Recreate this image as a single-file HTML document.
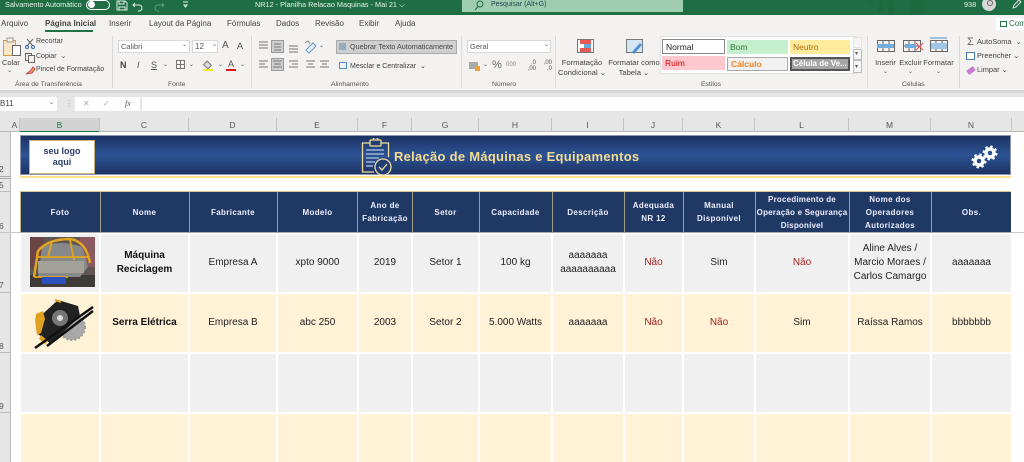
<!DOCTYPE html>
<html lang="pt"><head><meta charset="utf-8"><title>NR12</title>
<style>
html,body{margin:0;padding:0;background:#fff}
#p{position:relative;width:1024px;height:462px;overflow:hidden;font-family:"Liberation Sans",sans-serif;font-size:7.5px;color:#444;background:#fff;filter:blur(.3px)}
#p div{position:absolute;white-space:nowrap}
.c{text-align:center}
.r{background:#dadada;width:1px}
.hd{color:#eef;font-weight:bold;display:flex;align-items:center;justify-content:center;text-align:center;font-size:8px;line-height:13px;letter-spacing:.35px}
.sep{top:192px;width:1px;height:40px;background:#a59f88}
.cell{display:flex;align-items:center;justify-content:center;text-align:center;font-size:10px;line-height:14px;color:#222}
.g{background:#f0f0f0}.y{background:#fff2d6}
.red{color:#a82020}.b{font-weight:bold;color:#111}
.ch{top:118px;height:14px;line-height:14px;text-align:center;font-size:8.5px;color:#555;border-right:1px solid #c4c4c4;box-sizing:border-box}
.st{font-size:8.5px;height:14px;line-height:14px;padding-left:3px;box-sizing:border-box}
.t{font-size:8px;color:#444}
.s{font-size:7px;color:#444}
.l{font-size:6.8px;color:#555;top:81px}
.v{font-size:6px;color:#555}
.rn{left:-1px;font-size:8.5px;color:#555}
</style></head><body><div id="p">
<!-- title bar -->
<div style="left:0;top:0;width:1024px;height:15px;background:#1f6e43"></div>
<div style="left:868px;top:0;width:6px;height:6px;background:#1c6a3e"></div><div style="left:878px;top:0;width:5px;height:12px;background:#1c6a3e"></div><div style="left:888px;top:0;width:5px;height:15px;background:#1c6a3e"></div><div style="left:910px;top:0;width:14px;height:15px;background:#1c6a3e"></div>
<div style="left:5px;top:0;color:#e8f2ec;font-size:7.3px;line-height:10px">Salvamento Automático</div>
<div style="left:86px;top:0;width:22px;height:8px;border:1px solid #fff;border-radius:5px"></div>
<div style="left:88px;top:1px;width:7px;height:7px;background:#fff;border-radius:50%"></div>
<svg style="position:absolute;left:115px;top:0" width="80" height="12" fill="none" stroke="#dfeee6" stroke-width="1"><path d="M2 1h8l2 2v7H2zM4 1v3h5V1M4 10V7h6v3"/><path d="M20 3l-2 2 2 2M18 5h6a3 3 0 0 1 0 6h-1"/><path d="M47 3l2 2-2 2M49 5h-6a3 3 0 0 0 0 6h1" stroke="#5f9c7c"/><path d="M68 2h5M69 5h3l-1.500 2z"/></svg>
<div style="left:255px;top:0;color:#e8f2ec;font-size:7.3px;line-height:10px">NR12 - Planilha Relacao Maquinas - Mai 21 ⌵</div>
<div style="left:462px;top:0;width:221px;height:12px;background:#a0cdb0"></div>
<svg style="position:absolute;left:473px;top:0" width="12" height="11" fill="none" stroke="#1f6e43"><circle cx="7" cy="4" r="3"/><path d="M5 6.500L2 10"/></svg>
<div style="left:491px;top:0;color:#245;font-size:7px;line-height:10px">Pesquisar (Alt+G)</div>
<div style="left:964px;top:0;color:#e8f2ec;font-size:7.3px;line-height:10px">938</div>
<div style="left:982px;top:-3px;width:14px;height:14px;background:#d8d8d8;border-radius:50%"></div>
<div style="left:987px;top:0;width:4px;height:4px;border:1px solid #666;border-radius:50%"></div>
<svg style="position:absolute;left:1011px;top:0" width="12" height="10" fill="none" stroke="#e4e4e4"><path d="M2 8l1-3 5-5 2 2-5 5z"/></svg>
<!-- tabs + ribbon -->
<div style="left:0;top:15px;width:1024px;height:76px;background:#f3f2f1"></div>
<div style="left:0;top:90px;width:1024px;height:3px;background:#d6d6d6"></div>
<div class="t" style="left:1px;top:19px">Arquivo</div>
<div style="left:45px;top:19px;font-size:8px;font-weight:bold;color:#444">Página Inicial</div>
<div style="left:45px;top:30px;width:48px;height:2px;background:#217346"></div>
<div class="t" style="left:109px;top:19px">Inserir</div><div class="t" style="left:149px;top:19px">Layout da Página</div>
<div class="t" style="left:227px;top:19px">Fórmulas</div><div class="t" style="left:276px;top:19px">Dados</div>
<div class="t" style="left:315px;top:19px">Revisão</div><div class="t" style="left:359px;top:19px">Exibir</div><div class="t" style="left:395px;top:19px">Ajuda</div>
<div style="left:996px;top:18px;width:28px;height:12px;background:#fff"></div>
<div style="left:1009px;top:19px;font-size:8px;color:#217346">Com</div>
<div style="left:1000px;top:21px;width:5px;height:4px;border:1px solid #217346"></div>
<!-- separators -->
<div class="r" style="left:112px;top:36px;height:52px"></div><div class="r" style="left:251px;top:36px;height:52px"></div><div class="r" style="left:461px;top:36px;height:52px"></div><div class="r" style="left:555px;top:36px;height:52px"></div><div class="r" style="left:867px;top:36px;height:52px"></div><div class="r" style="left:959px;top:36px;height:52px"></div>
<!-- clipboard -->
<svg style="position:absolute;left:2px;top:37px" width="20" height="21"><rect x="1.500" y="3.500" width="12" height="15" fill="#fbe7c8" stroke="#d89a42"/><rect x="5" y="1" width="6" height="4" fill="#f3f2f1" stroke="#999"/><rect x="10.500" y="8.500" width="8" height="10" fill="#fff" stroke="#666"/></svg>
<div class="s" style="left:2px;top:58px;font-size:7.5px">Colar</div><div class="v" style="left:7px;top:67px">⌄</div>
<svg style="position:absolute;left:24px;top:37px" width="13" height="40" fill="none" stroke="#666"><path d="M3 2l6 7M9 2L3 9" /><circle cx="3" cy="10" r="1.500" stroke="#2b6cb0"/><circle cx="9" cy="10" r="1.500" stroke="#2b6cb0"/><rect x="1.500" y="16.500" width="6" height="7"/><rect x="4.500" y="18.500" width="6" height="7" fill="#f3f2f1"/><path d="M2 37l4-3 3-4 2 2-3 4z" fill="#e8a33d" stroke="#c46"/></svg>
<div class="s" style="left:36px;top:38px">Recortar</div><div class="s" style="left:36px;top:52px">Copiar &nbsp;⌄</div><div class="s" style="left:36px;top:66px">Pincel de Formatação</div>
<div class="l" style="left:15px">Área de Transferência</div>
<div class="l" style="left:168px">Fonte</div><div class="l" style="left:331px">Alinhamento</div><div class="l" style="left:492px">Número</div><div class="l" style="left:701px">Estilos</div><div class="l" style="left:902px">Células</div>
<!-- font -->
<div style="left:118px;top:40px;width:72px;height:13px;background:#fff;border:1px solid #d8d8d8;box-sizing:border-box;padding-left:2px;line-height:11px;color:#555;font-size:7.5px">Calibri</div>
<div class="v" style="left:182px;top:41px">⌄</div>
<div style="left:192px;top:40px;width:26px;height:13px;background:#fff;border:1px solid #d8d8d8;box-sizing:border-box;padding-left:2px;line-height:11px;color:#555;font-size:8px">12</div>
<div class="v" style="left:212px;top:41px">⌄</div>
<div style="left:222px;top:40px;font-size:10px;color:#555">A</div><div style="left:237px;top:41px;font-size:9px;color:#555">A</div>
<div style="left:120px;top:60px;font-size:9px;font-weight:bold;color:#444">N</div><div style="left:137px;top:60px;font-size:9px;font-style:italic;color:#555">I</div><div style="left:151px;top:60px;font-size:9px;text-decoration:underline;color:#555">S</div>
<div class="v" style="left:163px;top:61px">⌄</div>
<div style="left:176px;top:60px;width:9px;height:9px;border:1px solid #777;box-sizing:border-box"></div>
<div style="left:180px;top:60px;width:1px;height:9px;background:#777"></div><div style="left:176px;top:64px;width:9px;height:1px;background:#777"></div>
<div class="v" style="left:189px;top:61px">⌄</div>
<div style="left:204px;top:62px;width:7px;height:6px;background:#ddd;border:1px solid #777;box-sizing:border-box;transform:rotate(45deg)"></div><div style="left:203px;top:69px;width:10px;height:2px;background:#f2ee20"></div>
<div class="v" style="left:218px;top:61px">⌄</div>
<div style="left:228px;top:59px;font-size:9px;color:#555">A</div><div style="left:226px;top:69px;width:10px;height:2px;background:#e01515"></div>
<div class="v" style="left:240px;top:61px">⌄</div>
<!-- align -->
<svg style="position:absolute;left:257px;top:39px" width="75" height="34" stroke="#777" fill="none">
<rect x="14.500" y="1.500" width="12" height="12" fill="#cfcfcf" stroke="#999"/><rect x="14.500" y="19.500" width="12" height="12" fill="#cfcfcf" stroke="#999"/>
<path d="M2 3h9M2 6h9M2 9h9M17 5h7M17 8h7M17 11h7M32 7h9M32 10h9M32 13h9M2 22h9M2 25h6M2 28h9M16 22h9M17 25h7M16 28h9M32 22h9M35 25h6M32 28h9M49 22h9M51 25h5M49 28h9M63 22h9M65 25h5M63 28h9"/>
<path d="M49 11l7-7 3 3-7 7z" stroke="#5a9bd5"/><path d="M48 4l3-2 2 3" stroke="#888"/></svg>
<div class="v" style="left:319px;top:42px">⌄</div>
<div style="left:336px;top:40px;width:121px;height:14px;background:#cfcfcf;border:1px solid #aaa;box-sizing:border-box;font-size:7.2px;line-height:12px;color:#444;padding-left:13px">Quebrar Texto Automaticamente</div>
<div style="left:339px;top:43px;width:7px;height:7px;background:#9ab"></div>
<div style="left:339px;top:62px;width:8px;height:7px;border:1px solid #4a90d0;box-sizing:border-box"></div>
<div class="s" style="left:350px;top:62px">Mesclar e Centralizar &nbsp;⌄</div>
<!-- number -->
<div style="left:467px;top:40px;width:84px;height:13px;background:#fff;border:1px solid #d8d8d8;box-sizing:border-box;padding-left:2px;line-height:11px;color:#555;font-size:7.5px">Geral</div>
<div class="v" style="left:544px;top:41px">⌄</div>
<div style="left:469px;top:62px;width:9px;height:7px;background:#aaa"></div><div style="left:475px;top:66px;width:5px;height:5px;background:#f0a030"></div>
<div class="v" style="left:483px;top:61px">⌄</div>
<div style="left:492px;top:59px;font-size:11px;color:#666">%</div><div style="left:506px;top:62px;font-size:6px;color:#888">000</div>
<div style="left:524px;top:60px;font-size:6px;line-height:6px;color:#555;width:12px;text-align:right">,0<br>,00</div>
<div style="left:540px;top:60px;font-size:6px;line-height:6px;color:#555;width:12px;text-align:right">,00<br>,0</div>
<!-- cond -->
<svg style="position:absolute;left:574px;top:39px" width="80" height="17"><rect x="3.500" y="0.500" width="16" height="13" fill="#fff" stroke="#777"/><rect x="6" y="1" width="11" height="4" fill="#e85a5a"/><rect x="10" y="5" width="7" height="4" fill="#6aa8dc"/><rect x="6" y="9" width="11" height="4" fill="#e85a5a"/><rect x="52.500" y="0.500" width="16" height="13" fill="#d5e5f2" stroke="#777"/><path d="M58 13l8-9 2 2-8 9z" fill="#4a90d0"/></svg>
<div class="s c" style="left:558px;top:58px;width:48px;line-height:9.500px;font-size:7.600px">Formatação<br>Condicional ⌄</div>
<div class="s c" style="left:604px;top:58px;width:60px;line-height:9.500px;font-size:7.600px">Formatar como<br>Tabela ⌄</div>
<!-- styles -->
<div style="left:660px;top:36px;width:197px;height:38px;background:#fff;border:1px solid #e2e2e2;box-sizing:border-box"></div>
<div class="st" style="left:662px;top:39px;width:63px;height:15px;background:#fff;border:1px solid #888;color:#222">Normal</div>
<div class="st" style="left:727px;top:40px;width:61px;background:#c6efce;color:#2f7d32">Bom</div>
<div class="st" style="left:790px;top:40px;width:60px;background:#ffeb9c;color:#a8700a">Neutro</div>
<div class="st" style="left:662px;top:56px;width:63px;background:#ffc7ce;color:#c00">Ruim</div>
<div class="st" style="left:727px;top:57px;width:61px;background:#f2f2f2;border:1px solid #aaa;color:#f08020;font-weight:bold;line-height:12px">Cálculo</div>
<div class="st" style="left:790px;top:57px;width:60px;background:#a5a5a5;border:2px solid #555;color:#fff;font-weight:bold;line-height:10px;padding-left:1px;font-size:8px">Célula de Ve...</div>
<div style="left:853px;top:37px;width:9px;height:11px;background:#f5f5f5;border:1px solid #e4e4e4;box-sizing:border-box"></div>
<div style="left:853px;top:49px;width:9px;height:11px;background:#f5f5f5;border:1px solid #bbb;box-sizing:border-box"></div>
<div style="left:853px;top:60px;width:9px;height:13px;background:#f5f5f5;border:1px solid #bbb;box-sizing:border-box"></div>
<div class="v" style="left:855px;top:50px">▾</div><div class="v" style="left:855px;top:63px">▾</div>
<!-- cells -->
<svg style="position:absolute;left:875px;top:37px" width="82" height="18" fill="none" stroke="#666"><rect x="2.500" y="3.500" width="17" height="11"/><rect x="28.500" y="3.500" width="17" height="11"/><rect x="55.500" y="3.500" width="17" height="11"/><path d="M8 4v10M14 4v10M3 9h17M34 4v10M40 4v10M29 9h17M61 4v10M67 4v10"/><rect x="2" y="7" width="17" height="4" fill="#70aee0" stroke="none"/><rect x="30" y="7" width="11" height="4" fill="#70aee0" stroke="none"/><rect x="56" y="6" width="16" height="6" fill="#9cc5e8" stroke="none"/><path d="M41 6l7 7M48 6l-7 7" stroke="#e85050"/><path d="M55 1h17" stroke="#4a90d0"/></svg>
<div class="s c" style="left:869.500px;top:58px;width:32px;font-size:7.500px">Inserir</div><div class="s c" style="left:894.500px;top:58px;width:32px;font-size:7.500px">Excluir</div><div class="s c" style="left:920.500px;top:58px;width:36px;font-size:7.500px">Formatar</div>
<div class="v c" style="left:869.500px;top:68px;width:32px">⌄</div><div class="v c" style="left:894.500px;top:68px;width:32px">⌄</div><div class="v c" style="left:920.500px;top:68px;width:36px">⌄</div>
<div style="left:967px;top:36px;font-size:11px;color:#666">Σ</div><div class="s" style="left:977px;top:37px;font-size:7.400px">AutoSoma &nbsp;⌄</div>
<div style="left:966px;top:52px;width:9px;height:8px;background:#fff;border:1px solid #4a7ab0;box-sizing:border-box"></div><div class="s" style="left:977px;top:51px;font-size:7.400px">Preencher ⌄</div>
<div style="left:967px;top:68px;width:8px;height:5px;background:#c87ad0;transform:rotate(-35deg)"></div><div class="s" style="left:977px;top:65px;font-size:7.400px">Limpar ⌄</div>
<!-- formula -->
<div style="left:0;top:93px;width:1024px;height:22px;background:#e6e6e6"></div>
<div style="left:0;top:97px;width:57px;height:14px;background:#fff"></div>
<div style="left:0;top:98px;font-size:8px;color:#444;line-height:12px">B11</div><div class="v" style="left:49px;top:99px">⌄</div>
<div style="left:65px;top:99px;color:#aaa;font-size:8px">⋮</div>
<div style="left:75px;top:97px;width:65px;height:14px;background:#fff"></div>
<div style="left:83px;top:99px;color:#aaa;font-size:8px">✕</div><div style="left:103px;top:99px;color:#aaa;font-size:8px">✓</div><div style="left:125px;top:99px;color:#555;font-size:8px;font-style:italic;font-family:'Liberation Serif',serif">fx</div>
<div style="left:142px;top:97px;width:882px;height:14px;background:#fff"></div>
<!-- sheet -->
<div style="left:0;top:115px;width:1024px;height:17px;background:#e6e6e6"></div>
<div style="left:0;top:131px;width:1024px;height:1px;background:#b5b5b5"></div>
<div style="left:0;top:132px;width:10px;height:330px;background:#e6e6e6;border-right:1px solid #bbb"></div>
<div style="left:20px;top:118px;width:80px;height:14px;background:#d3d3d3;border-bottom:1px solid #217346;box-sizing:border-box"></div>
<div class="ch" style="left:10px;width:10px">A</div><div class="ch" style="left:20px;width:80px;color:#217346">B</div><div class="ch" style="left:100px;width:89px">C</div><div class="ch" style="left:189px;width:88px">D</div><div class="ch" style="left:277px;width:81px">E</div><div class="ch" style="left:358px;width:54px">F</div><div class="ch" style="left:412px;width:67px">G</div><div class="ch" style="left:479px;width:73px">H</div><div class="ch" style="left:552px;width:72px">I</div><div class="ch" style="left:624px;width:59px">J</div><div class="ch" style="left:683px;width:72px">K</div><div class="ch" style="left:755px;width:94px">L</div><div class="ch" style="left:849px;width:82px">M</div><div class="ch" style="left:931px;width:81px">N</div>
<div class="rn" style="top:164px">2</div><div style="left:0;top:176px;width:10px;height:1px;background:#aaa"></div><div style="left:0;top:178px;width:10px;height:1px;background:#aaa"></div><div class="rn" style="top:180px">5</div><div style="left:0;top:191px;width:10px;height:1px;background:#bbb"></div>
<div class="rn" style="top:221px">6</div><div style="left:0;top:232px;width:1024px;height:1px;background:#c8c8c8"></div>
<div class="rn" style="top:280px">7</div><div style="left:0;top:292px;width:10px;height:1px;background:#bbb"></div>
<div class="rn" style="top:341px">8</div><div style="left:0;top:352px;width:10px;height:1px;background:#bbb"></div>
<div class="rn" style="top:401px">9</div><div style="left:0;top:412px;width:10px;height:1px;background:#bbb"></div>
<!-- banner -->
<div style="left:20px;top:135px;width:991px;height:40px;background:linear-gradient(#1c3263,#2c5394 50%,#1c3263);border:1px solid #8a94ad;box-sizing:border-box"></div>
<div style="left:20px;top:176px;width:991px;height:2px;background:#ffe08f"></div>
<div style="left:29px;top:140px;width:66px;height:34px;background:#fff;border:1px solid #c9b279;box-sizing:border-box;text-align:center;font-weight:bold;font-size:9px;line-height:11px;color:#2a3b66;padding-top:5px">seu logo<br>aqui</div>
<svg style="position:absolute;left:360px;top:138px" width="32" height="38" fill="none" stroke="#f3dc9a" stroke-width="1.300"><path d="M11 5H2.500v29H14M20 5h8.500v14"/><rect x="10" y="2" width="11" height="6" rx="1" fill="#1f3c75"/><path d="M13 2a2.500 2.500 0 0 1 5 0"/><path d="M6 12h18M6 16h18M6 20h13M6 24h9M6 28h7" stroke="#9db3d8" stroke-width="1.500"/><circle cx="23" cy="29" r="8" fill="#1f3c75"/><path d="M19 29l3 3 5-6"/></svg>
<div style="left:394px;top:148px;font-size:13px;font-weight:bold;color:#f5dc92;line-height:17px;letter-spacing:.27px">Relação de Máquinas e Equipamentos</div>
<svg style="position:absolute;left:970px;top:142px" width="30" height="30" fill="none" stroke="#fff"><circle cx="9" cy="19" r="4" stroke-width="3.500"/><circle cx="9" cy="19" r="6.500" stroke-width="2" stroke-dasharray="2.500 2.600"/><circle cx="20" cy="11" r="4" stroke-width="3.500"/><circle cx="20" cy="11" r="6.500" stroke-width="2" stroke-dasharray="2.500 2.600"/></svg>
<!-- table header -->
<div style="left:20px;top:191px;width:991px;height:41px;background:#1f3864;border-top:1px solid #d9c58f;border-left:1px solid #c9b279;box-sizing:border-box"></div>
<div style="left:20px;top:232px;width:991px;height:1px;background:#a9a9a9"></div>
<div class="sep" style="left:100px"></div><div class="sep" style="left:189px"></div><div class="sep" style="left:277px"></div><div class="sep" style="left:357px"></div><div class="sep" style="left:412px"></div><div class="sep" style="left:479px"></div><div class="sep" style="left:552px"></div><div class="sep" style="left:624px"></div><div class="sep" style="left:683px"></div><div class="sep" style="left:755px"></div><div class="sep" style="left:849px"></div><div class="sep" style="left:931px"></div>
<div class="hd" style="left:21px;top:192px;width:78px;height:40px">Foto</div><div class="hd" style="left:101px;top:192px;width:87px;height:40px">Nome</div><div class="hd" style="left:190px;top:192px;width:86px;height:40px">Fabricante</div><div class="hd" style="left:278px;top:192px;width:79px;height:40px">Modelo</div><div class="hd" style="left:359px;top:192px;width:52px;height:40px">Ano de<br>Fabricação</div><div class="hd" style="left:413px;top:192px;width:65px;height:40px">Setor</div><div class="hd" style="left:480px;top:192px;width:71px;height:40px">Capacidade</div><div class="hd" style="left:553px;top:192px;width:70px;height:40px">Descrição</div><div class="hd" style="left:625px;top:192px;width:57px;height:40px">Adequada<br>NR 12</div><div class="hd" style="left:684px;top:192px;width:70px;height:40px">Manual<br>Disponível</div><div class="hd" style="left:756px;top:192px;width:92px;height:40px;letter-spacing:.2px">Procedimento de<br>Operação e Segurança<br>Disponível</div><div class="hd" style="left:850px;top:192px;width:80px;height:40px">Nome dos<br>Operadores<br>Autorizados</div><div class="hd" style="left:932px;top:192px;width:79px;height:40px">Obs.</div>
<!-- row 7 -->
<div class="cell g" style="left:21px;top:234px;width:78px;height:58px"></div><div class="cell g b" style="left:101px;top:234px;width:87px;height:58px">Máquina<br>Reciclagem</div><div class="cell g" style="left:190px;top:234px;width:86px;height:58px">Empresa A</div><div class="cell g" style="left:278px;top:234px;width:79px;height:58px">xpto 9000</div><div class="cell g" style="left:359px;top:234px;width:52px;height:58px">2019</div><div class="cell g" style="left:413px;top:234px;width:65px;height:58px">Setor 1</div><div class="cell g" style="left:480px;top:234px;width:71px;height:58px">100 kg</div><div class="cell g" style="left:553px;top:234px;width:70px;height:58px">aaaaaaa<br>aaaaaaaaaa</div><div class="cell g red" style="left:625px;top:234px;width:57px;height:58px">Não</div><div class="cell g" style="left:684px;top:234px;width:70px;height:58px">Sim</div><div class="cell g red" style="left:756px;top:234px;width:92px;height:58px">Não</div><div class="cell g" style="left:850px;top:234px;width:80px;height:58px">Aline Alves /<br>Marcio Moraes /<br>Carlos Camargo</div><div class="cell g" style="left:932px;top:234px;width:79px;height:58px">aaaaaaa</div>
<!-- row 8 -->
<div class="cell y" style="left:21px;top:294px;width:78px;height:58px"></div><div class="cell y b" style="left:101px;top:294px;width:87px;height:58px">Serra Elétrica</div><div class="cell y" style="left:190px;top:294px;width:86px;height:58px">Empresa B</div><div class="cell y" style="left:278px;top:294px;width:79px;height:58px">abc 250</div><div class="cell y" style="left:359px;top:294px;width:52px;height:58px">2003</div><div class="cell y" style="left:413px;top:294px;width:65px;height:58px">Setor 2</div><div class="cell y" style="left:480px;top:294px;width:71px;height:58px">5.000 Watts</div><div class="cell y" style="left:553px;top:294px;width:70px;height:58px">aaaaaaa</div><div class="cell y red" style="left:625px;top:294px;width:57px;height:58px">Não</div><div class="cell y red" style="left:684px;top:294px;width:70px;height:58px">Não</div><div class="cell y" style="left:756px;top:294px;width:92px;height:58px">Sim</div><div class="cell y" style="left:850px;top:294px;width:80px;height:58px">Raíssa Ramos</div><div class="cell y" style="left:932px;top:294px;width:79px;height:58px">bbbbbbb</div>
<!-- row 9 -->
<div class="g" style="left:21px;top:354px;width:78px;height:58px"></div><div class="g" style="left:101px;top:354px;width:87px;height:58px"></div><div class="g" style="left:190px;top:354px;width:86px;height:58px"></div><div class="g" style="left:278px;top:354px;width:79px;height:58px"></div><div class="g" style="left:359px;top:354px;width:52px;height:58px"></div><div class="g" style="left:413px;top:354px;width:65px;height:58px"></div><div class="g" style="left:480px;top:354px;width:71px;height:58px"></div><div class="g" style="left:553px;top:354px;width:70px;height:58px"></div><div class="g" style="left:625px;top:354px;width:57px;height:58px"></div><div class="g" style="left:684px;top:354px;width:70px;height:58px"></div><div class="g" style="left:756px;top:354px;width:92px;height:58px"></div><div class="g" style="left:850px;top:354px;width:80px;height:58px"></div><div class="g" style="left:932px;top:354px;width:79px;height:58px"></div>
<!-- row 10 -->
<div class="y" style="left:21px;top:414px;width:78px;height:48px"></div><div class="y" style="left:101px;top:414px;width:87px;height:48px"></div><div class="y" style="left:190px;top:414px;width:86px;height:48px"></div><div class="y" style="left:278px;top:414px;width:79px;height:48px"></div><div class="y" style="left:359px;top:414px;width:52px;height:48px"></div><div class="y" style="left:413px;top:414px;width:65px;height:48px"></div><div class="y" style="left:480px;top:414px;width:71px;height:48px"></div><div class="y" style="left:553px;top:414px;width:70px;height:48px"></div><div class="y" style="left:625px;top:414px;width:57px;height:48px"></div><div class="y" style="left:684px;top:414px;width:70px;height:48px"></div><div class="y" style="left:756px;top:414px;width:92px;height:48px"></div><div class="y" style="left:850px;top:414px;width:80px;height:48px"></div><div class="y" style="left:932px;top:414px;width:79px;height:48px"></div>
<!-- photos -->
<svg style="position:absolute;left:30px;top:237px" width="65" height="50"><rect width="65" height="50" fill="#5f5654"/><rect width="14" height="30" fill="#6b4545"/><rect x="50" y="0" width="15" height="30" fill="#8a5a60"/><rect y="38" width="65" height="12" fill="#3d3a38"/><path d="M12 10Q30 2 52 10L58 30 50 40H8z" fill="#86888a"/><path d="M8 24h46v12H8z" fill="#a3a198"/><path d="M4 40L8 14Q18 2 40 2 56 4 60 26" fill="none" stroke="#e2a51f" stroke-width="2.500"/><path d="M22 4L18 20M8 20H58M40 3l4 20M4 40H38" fill="none" stroke="#e2a51f" stroke-width="1.800"/><rect x="12" y="40" width="24" height="7" rx="1" fill="#2a50c0"/></svg>
<svg style="position:absolute;left:33px;top:298px" width="62" height="52"><circle cx="39" cy="29" r="13" fill="#a8a8a8" stroke="#999" stroke-width="2" stroke-dasharray="2 2"/><path d="M25 2L45 8 47 18 18 46 5 36 3 22z" fill="#222"/><circle cx="27" cy="20" r="8" fill="#777"/><circle cx="27" cy="20" r="3" fill="#ddd"/><path d="M3 16l7-3 2 8-4 14-4 2-2-14z" fill="#e0a020"/><path d="M8 37l7 6-3 3-6-5z" fill="#e0a020"/><path d="M2 50L60 9M14 48L60 13" stroke="#111" stroke-width="2.500"/><path d="M22 2l6 2" stroke="#e0a020" stroke-width="2"/></svg>
</div></body></html>
